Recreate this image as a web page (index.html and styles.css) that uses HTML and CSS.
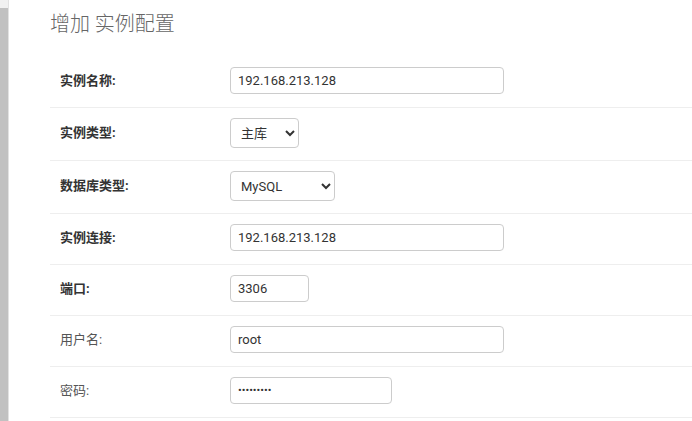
FILE: index.html
```html
<!DOCTYPE html>
<html lang="zh-CN">
<head>
<meta charset="utf-8">
<title>增加 实例配置</title>
<link rel="stylesheet" href="styles.css">
</head>
<body>
<div class="page">
  <div class="rail"><div class="rail-top"></div></div>
  <div class="main">
    <h1 class="title">增加 实例配置</h1>
    <form class="form">
      <div class="row">
        <label class="label required">实例名称:</label>
        <input class="field w-long" type="text" value="192.168.213.128">
      </div>
      <div class="row row-sel">
        <label class="label required">实例类型:</label>
        <select class="field sel w-type"><option>主库</option><option>从库</option></select>
      </div>
      <div class="row row-sel">
        <label class="label required">数据库类型:</label>
        <select class="field sel w-db"><option>MySQL</option><option>MsSQL</option></select>
      </div>
      <div class="row">
        <label class="label required">实例连接:</label>
        <input class="field w-long" type="text" value="192.168.213.128">
      </div>
      <div class="row">
        <label class="label required">端口:</label>
        <input class="field w-port" type="text" value="3306">
      </div>
      <div class="row">
        <label class="label">用户名:</label>
        <input class="field w-long" type="text" value="root">
      </div>
      <div class="row">
        <label class="label">密码:</label>
        <input class="field w-pass" type="password" value="123456789">
      </div>
    </form>
  </div>
</div>
</body>
</html>
```
FILE: styles.css
```css
html, body {
  margin: 0;
  padding: 0;
  background: #fff;
}
body {
  font-family: Roboto, "Noto Sans CJK SC", sans-serif;
  font-size: 13px;
  color: #333;
}
.page {
  display: flex;
  min-height: 421px;
}
.rail {
  width: 8px;
  flex: none;
  background: #c1c1c1;
  border-right: 1px solid #e2e2e2;
}
.rail-top {
  height: 8px;
  background: #f1f1f1;
}
.main {
  flex: 1;
  padding-left: 41px;
}
.title {
  margin: 12px 0 21px;
  font-size: 20px;
  line-height: 24px;
  font-weight: 300;
  color: #666;
}
.form {
  display: flex;
  flex-direction: column;
}
.row {
  display: flex;
  align-items: center;
  padding: 10px 0 13px;
  border-bottom: 1px solid #eee;
}
.row-sel {
  padding-bottom: 12px;
}
.label {
  width: 170px;
  padding-left: 10px;
  flex: none;
  color: #555;
  line-height: 16px;
}
.label.required {
  font-weight: bold;
  color: #333;
}
.field {
  box-sizing: border-box;
  height: 27px;
  margin: 0;
  padding: 0 7px;
  border: 1px solid #ccc;
  border-radius: 4px;
  background: #fff;
  font-family: Roboto, "Noto Sans CJK SC", sans-serif;
  font-size: 13px;
  color: #333;
  outline: none;
}
.sel {
  height: 30px;
  padding: 0 4px 0 6px;
}
.w-long { width: 274px; }
.w-port { width: 79px; }
.w-pass {
  width: 162px;
  font-size: 11px;
}
.w-type { width: 69px; }
.w-db { width: 105px; }
```
